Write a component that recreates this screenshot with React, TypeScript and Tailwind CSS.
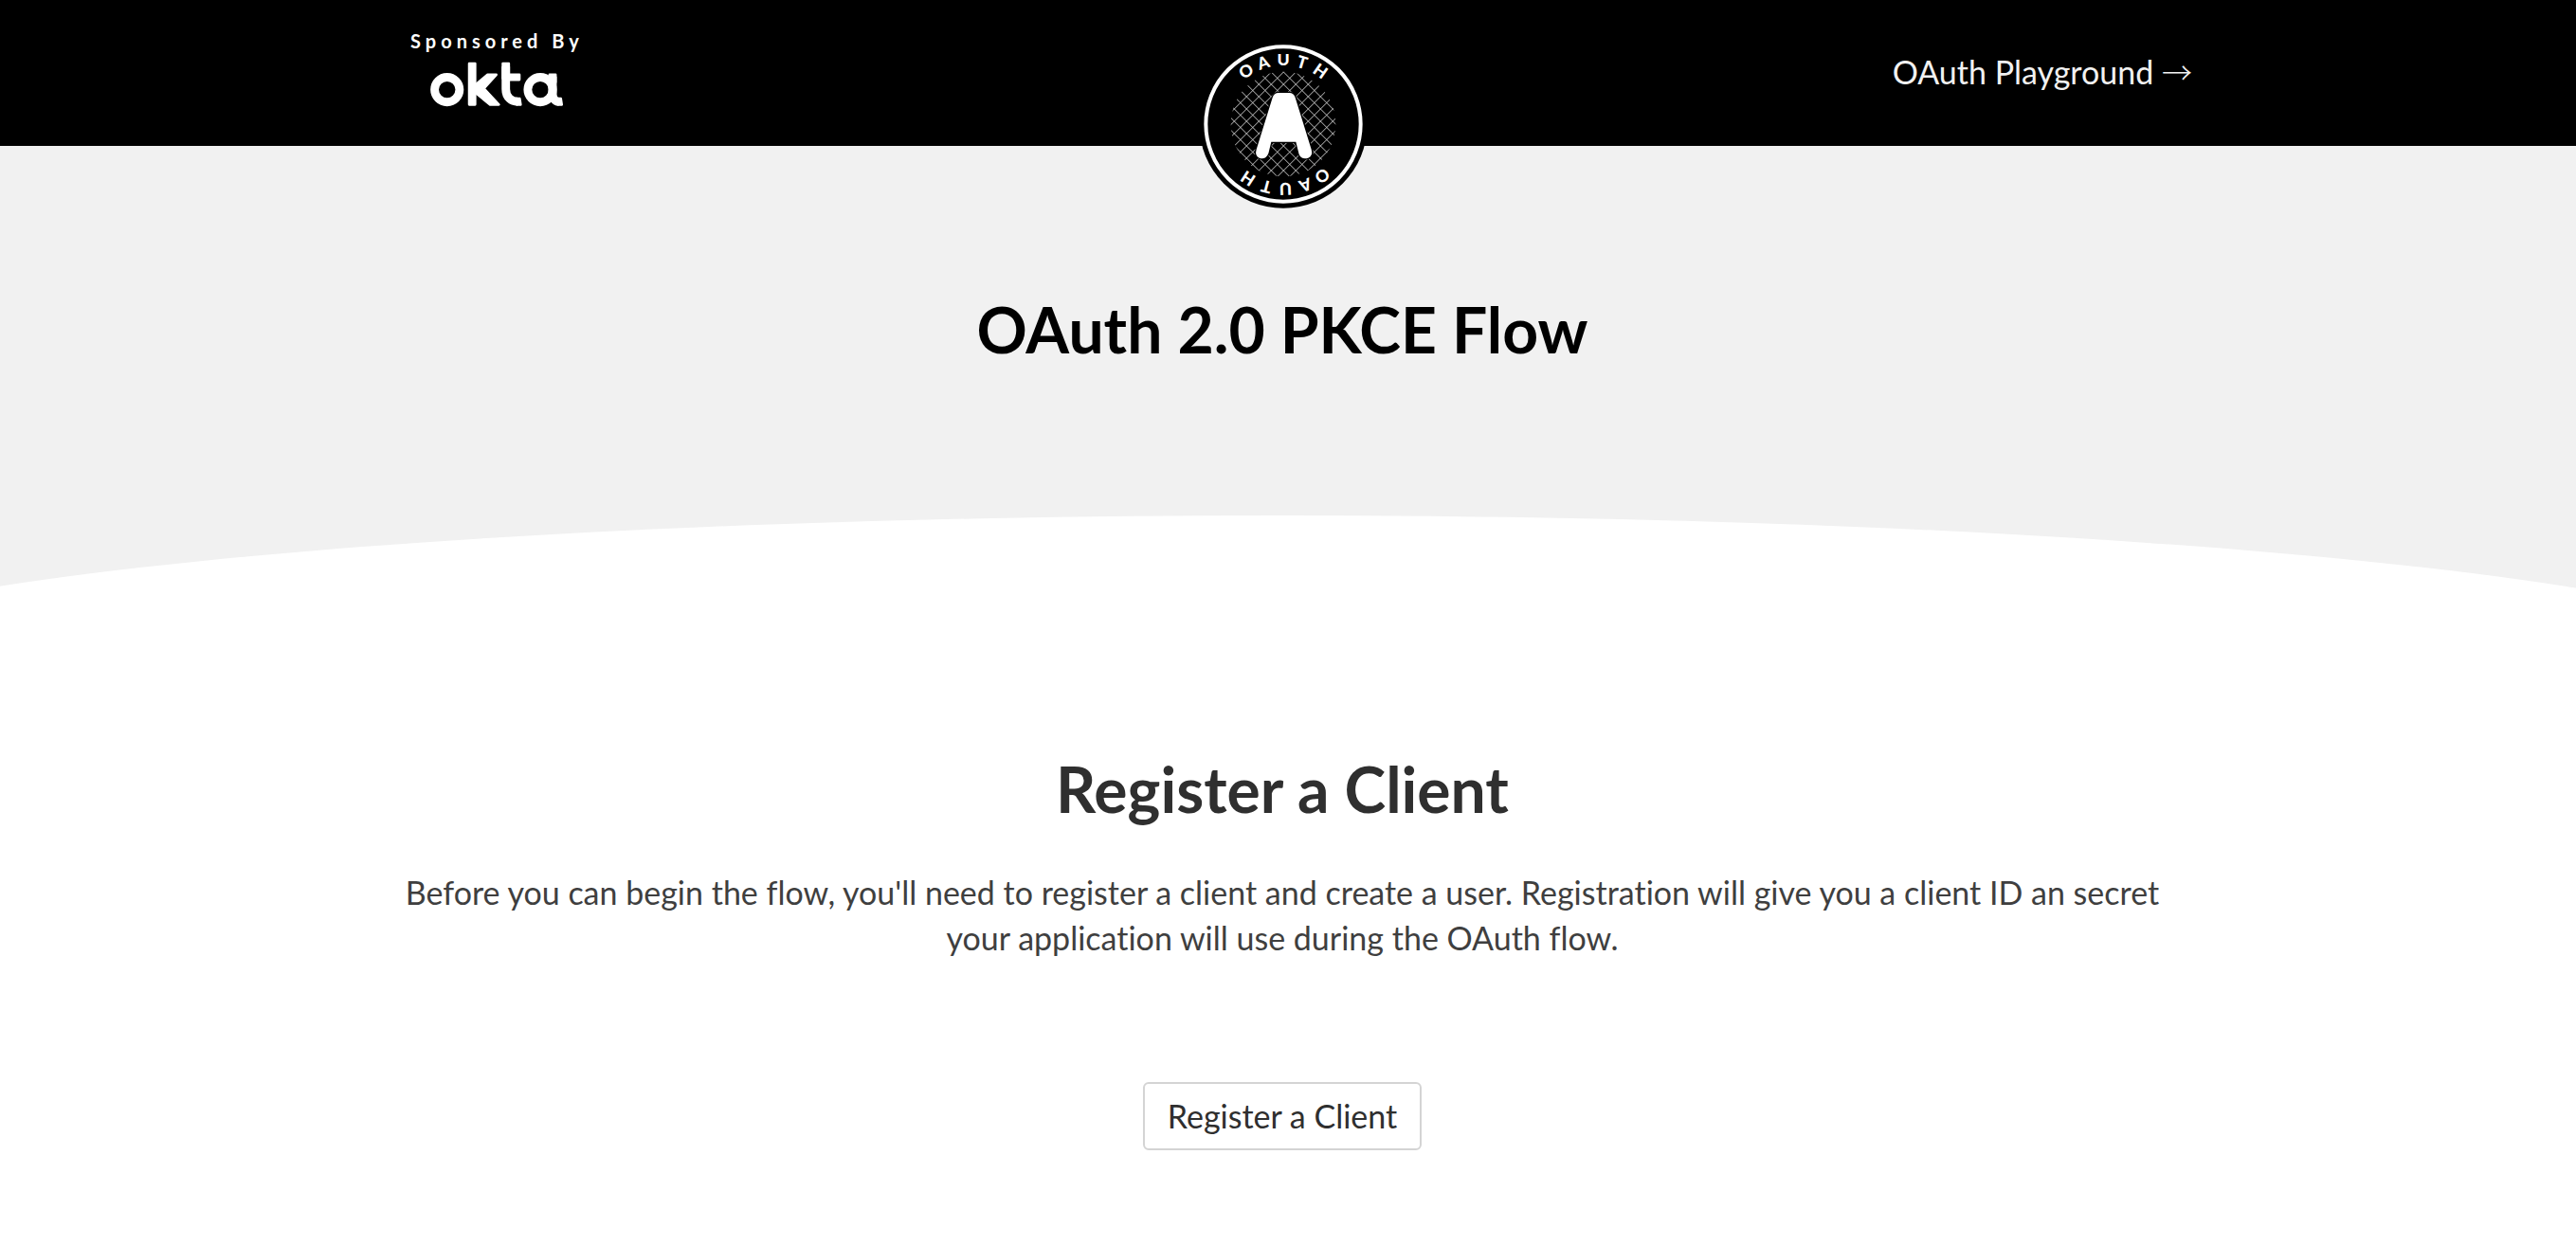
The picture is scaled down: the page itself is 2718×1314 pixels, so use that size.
const RING_LETTERS = [
  { char: "O", angle: -35 },
  { char: "A", angle: -18 },
  { char: "U", angle: 0 },
  { char: "T", angle: 17 },
  { char: "H", angle: 35 },
];

const GRID_OFFSETS = [-6, -5, -4, -3, -2, -1, 0, 1, 2, 3, 4, 5, 6];

function OktaLogo() {
  return (
    <svg viewBox="160 196 430 146" className="h-12 w-36" role="img" aria-label="okta">
      <g fill="none" stroke="white" strokeWidth="27">
        <circle cx="216" cy="286" r="40" />
        <circle cx="515" cy="286" r="40" />
        <path d="M404.500 212V284C404.500 312 424 324.500 442 324.500" />
        <path d="M554.500 244V294C554.500 313 562 324.500 574 324.500" />
      </g>
      <g fill="white" stroke="white" strokeWidth="8" strokeLinejoin="round">
        <path d="M287 202H306V334H287Z" />
        <path d="M302 275L346 238H374L334 282L382 334H354L302 292Z" />
        <path d="M395 202H414V250H395Z" />
        <path d="M404 238H448V254H404Z" />
        <path d="M440 315H449L452 334H440Z" />
        <path d="M545 238H564V262H545Z" />
        <path d="M572 315H581L584 334H572Z" />
      </g>
    </svg>
  );
}

function RingWord({ rotation }: { rotation: number }) {
  return (
    <g transform={`rotate(${rotation} 267 267)`}>
      {RING_LETTERS.map(({ char, angle }) => (
        <text key={char} x="267" y="81" textAnchor="middle" transform={`rotate(${angle} 267 267)`}>
          {char}
        </text>
      ))}
    </g>
  );
}

function OAuthLogo() {
  return (
    <svg viewBox="0 0 534 534" className="size-[178px]" role="img" aria-label="OAuth">
      <defs>
        <clipPath id="mesh">
          <circle cx="267" cy="267" r="166" />
        </clipPath>
      </defs>
      <circle cx="267" cy="267" r="266" fill="black" />
      <circle cx="267" cy="267" r="245" fill="none" stroke="white" strokeWidth="12" />
      <g clipPath="url(#mesh)" stroke="#c4c4c4" strokeWidth="3">
        {GRID_OFFSETS.map((n) => (
          <path key={n} d={`M${268 + n * 39 - 200} 58l420 420M${268 + n * 39 + 200} 58l-420 420`} />
        ))}
      </g>
      <path
        d="M252 168H286Q300 168 305 183L356 347Q362 367 346 374Q326 381 317 363L307 323H229L220 360Q211 381 191 374Q176 367 182 347L233 183Q238 168 252 168Z"
        fill="white"
        stroke="black"
        strokeWidth="8"
        paintOrder="stroke"
      />
      <g fill="white" fontFamily="Lato, sans-serif" fontWeight="900" fontSize="53">
        <RingWord rotation={0} />
        <RingWord rotation={178} />
      </g>
    </svg>
  );
}

export default function App() {
  return (
    <div className="min-h-screen bg-white font-['Lato',sans-serif] text-[#3f3f3f] [font-variant-ligatures:none]">
      <header className="relative h-[154px] bg-black pr-3 text-white">
        <div className="mx-auto flex max-w-[1920px] items-start justify-between pl-10">
          <div className="flex flex-col items-center gap-2 pt-[29px]">
            <span className="text-[20px] leading-7 font-bold tracking-[5px]">Sponsored By</span>
            <a href="#okta">
              <OktaLogo />
            </a>
          </div>
          <a href="#playground" className="pt-[52px] text-[34px] leading-[48px] text-[#f1f1f1]">
            OAuth Playground <span className="font-['Noto_Sans_CJK_SC',sans-serif] text-[32px] leading-none font-light">→</span>
          </a>
        </div>
        <a href="#home" className="absolute inset-x-0 top-[42px] mx-auto w-fit pr-[10px]">
          <OAuthLogo />
        </a>
      </header>

      <section className="overflow-hidden bg-[#f1f1f1] pr-3">
        <h1 className="pt-[154px] pb-[156px] text-center text-[66px] leading-[80px] font-bold text-black">
          OAuth 2.0 PKCE Flow
        </h1>
        <div className="h-20">
          <div className="-mx-[10%] h-[334px] rounded-[50%] bg-white" />
        </div>
      </section>

      <main className="relative bg-white pr-3">
        <div className="mx-auto flex max-w-[1880px] flex-col items-center px-3 pt-[169px] text-center">
          <h2 className="text-[66px] leading-[80px] font-bold text-[#2f2f2f]">Register a Client</h2>
          <p className="pt-[45px] text-[34px] leading-[48px]">
            Before you can begin the flow, you'll need to register a client and create a user. Registration will
            give you a client ID an secret your application will use during the OAuth flow.
          </p>
          <button
            type="button"
            className="mt-32 rounded-md border-2 border-[#d4d4d4] px-6 py-3 text-[34px] leading-[44px] text-[#2f2f2f]"
          >
            Register a Client
          </button>
        </div>
      </main>
    </div>
  );
}
